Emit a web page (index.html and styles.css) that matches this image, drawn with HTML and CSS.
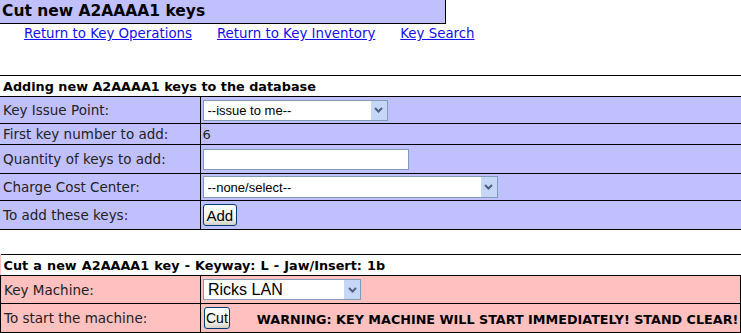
FILE: index.html
```html
<!DOCTYPE html>
<html lang="en">
<head>
    <meta charset="UTF-8">
    <title>Cut new A2AAAA1 keys</title>
    <link rel="stylesheet" href="styles.css">
</head>
<body>
    <div class="page-title">Cut new A2AAAA1 keys</div>
    <div class="nav-links">
        <a href="#">Return to Key Operations</a>
        <a href="#">Return to Key Inventory</a>
        <a href="#">Key Search</a>
    </div>

    <table class="form-table add-keys">
        <colgroup><col class="label-col"><col></colgroup>
        <tr class="head"><th colspan="2">Adding new A2AAAA1 keys to the database</th></tr>
        <tr class="row-select">
            <td class="label">Key Issue Point:</td>
            <td>
                <span class="select-wrap issue">
                    <select><option>--issue to me--</option></select>
                    <span class="arrow"><svg width="9" height="6" viewBox="0 0 9 6"><path d="M1 1l3.5 3.5L8 1" fill="none" stroke="#4d6185" stroke-width="2"/></svg></span>
                </span>
            </td>
        </tr>
        <tr class="row-text">
            <td class="label">First key number to add:</td>
            <td>6</td>
        </tr>
        <tr class="row-input">
            <td class="label">Quantity of keys to add:</td>
            <td><input type="text" class="qty"></td>
        </tr>
        <tr class="row-select">
            <td class="label">Charge Cost Center:</td>
            <td>
                <span class="select-wrap cost">
                    <select><option>--none/select--</option></select>
                    <span class="arrow"><svg width="9" height="6" viewBox="0 0 9 6"><path d="M1 1l3.5 3.5L8 1" fill="none" stroke="#4d6185" stroke-width="2"/></svg></span>
                </span>
            </td>
        </tr>
        <tr class="row-input">
            <td class="label">To add these keys:</td>
            <td><button class="xp-btn add-btn">Add</button></td>
        </tr>
    </table>

    <table class="form-table cut-key">
        <colgroup><col class="label-col"><col></colgroup>
        <tr class="head"><th colspan="2">Cut a new A2AAAA1 key - Keyway: L - Jaw/Insert: 1b</th></tr>
        <tr class="row-machine">
            <td class="label">Key Machine:</td>
            <td>
                <span class="select-wrap machine">
                    <select><option>Ricks LAN</option></select>
                    <span class="arrow"><svg width="9" height="6" viewBox="0 0 9 6"><path d="M1 1l3.5 3.5L8 1" fill="none" stroke="#4d6185" stroke-width="2"/></svg></span>
                </span>
            </td>
        </tr>
        <tr class="row-input">
            <td class="label">To start the machine:</td>
            <td class="start-cell"><button class="xp-btn cut-btn">Cut</button><span class="warning">WARNING: KEY MACHINE WILL START IMMEDIATELY! STAND CLEAR!</span></td>
        </tr>
    </table>
</body>
</html>
```

FILE: styles.css
```css
body {
    margin: 0;
    font-family: "DejaVu Sans", Verdana, sans-serif;
    font-size: 13px;
    color: #222;
    background: #fff;
}
.page-title {
    width: 443px;
    height: 23px;
    line-height: 23px;
    padding-left: 2px;
    background: #c0c0ff;
    border-right: 1px solid #000;
    border-bottom: 1px solid #000;
    font-size: 15.5px;
    font-weight: bold;
    color: #000;
}
.nav-links {
    display: flex;
    gap: 25px;
    padding: 1px 0 0 24px;
    height: 18px;
    line-height: 18px;
    font-size: 13.35px;
}
.nav-links a {
    color: #1010ee;
}
.form-table {
    width: 100%;
    table-layout: fixed;
    border-collapse: collapse;
    margin-top: 32px;
}
.form-table .label-col {
    width: 200px;
}
.form-table.cut-key {
    margin-top: 24px;
    background: #ffc0c0;
}
.form-table.add-keys {
    background: #c0c0ff;
}
.form-table th,
.form-table td {
    border-top: 1px solid #000;
    border-bottom: 1px solid #000;
    padding: 0 2px;
    vertical-align: middle;
    white-space: nowrap;
}
.form-table th {
    background: #fff;
    text-align: left;
    font-weight: bold;
    font-size: 12.8px;
    color: #000;
    height: 20px;
    padding-left: 3px;
}
.form-table.cut-key th {
    word-spacing: 0.7px;
}
.form-table td.label {
    border-right: 1px solid #000;
    padding-left: 3px;
    font-size: 13.5px;
}
.form-table.cut-key td.label {
    border-left: 1px solid #000;
}
.form-table.cut-key td:last-child {
    border-right: 1px solid #000;
}
.row-select td { height: 26px; }
.row-text td { height: 20px; }
.row-input td { height: 28px; }
.row-machine td { height: 27px; }

.select-wrap {
    position: relative;
    display: inline-block;
    vertical-align: middle;
}
.select-wrap select {
    -webkit-appearance: none;
    appearance: none;
    display: block;
    box-sizing: border-box;
    height: 21px;
    padding: 0 0 0 4px;
    border: 1px solid #7f9db9;
    background: #fff;
    font-family: "Liberation Sans", Arial, sans-serif;
    font-size: 13px;
    color: #000;
}
.select-wrap .arrow {
    position: absolute;
    right: 1px;
    top: 1px;
    bottom: 1px;
    width: 16px;
    display: flex;
    align-items: center;
    justify-content: center;
    background: #c6d6f7;
}
.select-wrap.issue select { width: 185px; }
.select-wrap.cost select { width: 295px; height: 22px; }
.select-wrap.machine select {
    width: 158px;
    height: 21px;
    font-size: 16px;
}
.qty {
    box-sizing: border-box;
    width: 206px;
    height: 21px;
    border: 1px solid #7f9db9;
    vertical-align: middle;
}
.xp-btn {
    box-sizing: border-box;
    height: 22px;
    border: 1px solid #003c74;
    border-radius: 3px;
    background: linear-gradient(#fff, #f0efe7 70%, #d6d0c5);
    font-family: "Liberation Sans", Arial, sans-serif;
    color: #000;
    vertical-align: middle;
}
.add-btn {
    padding: 0 3px;
    font-size: 15px;
}
.cut-btn {
    margin-left: 1px;
    padding: 0 1px;
    font-size: 14px;
}
.start-cell {
    overflow: hidden;
}
.warning {
    margin-left: 27px;
    font-weight: bold;
    color: #000;
    font-size: 12.75px;
    vertical-align: -2px;
}
```
